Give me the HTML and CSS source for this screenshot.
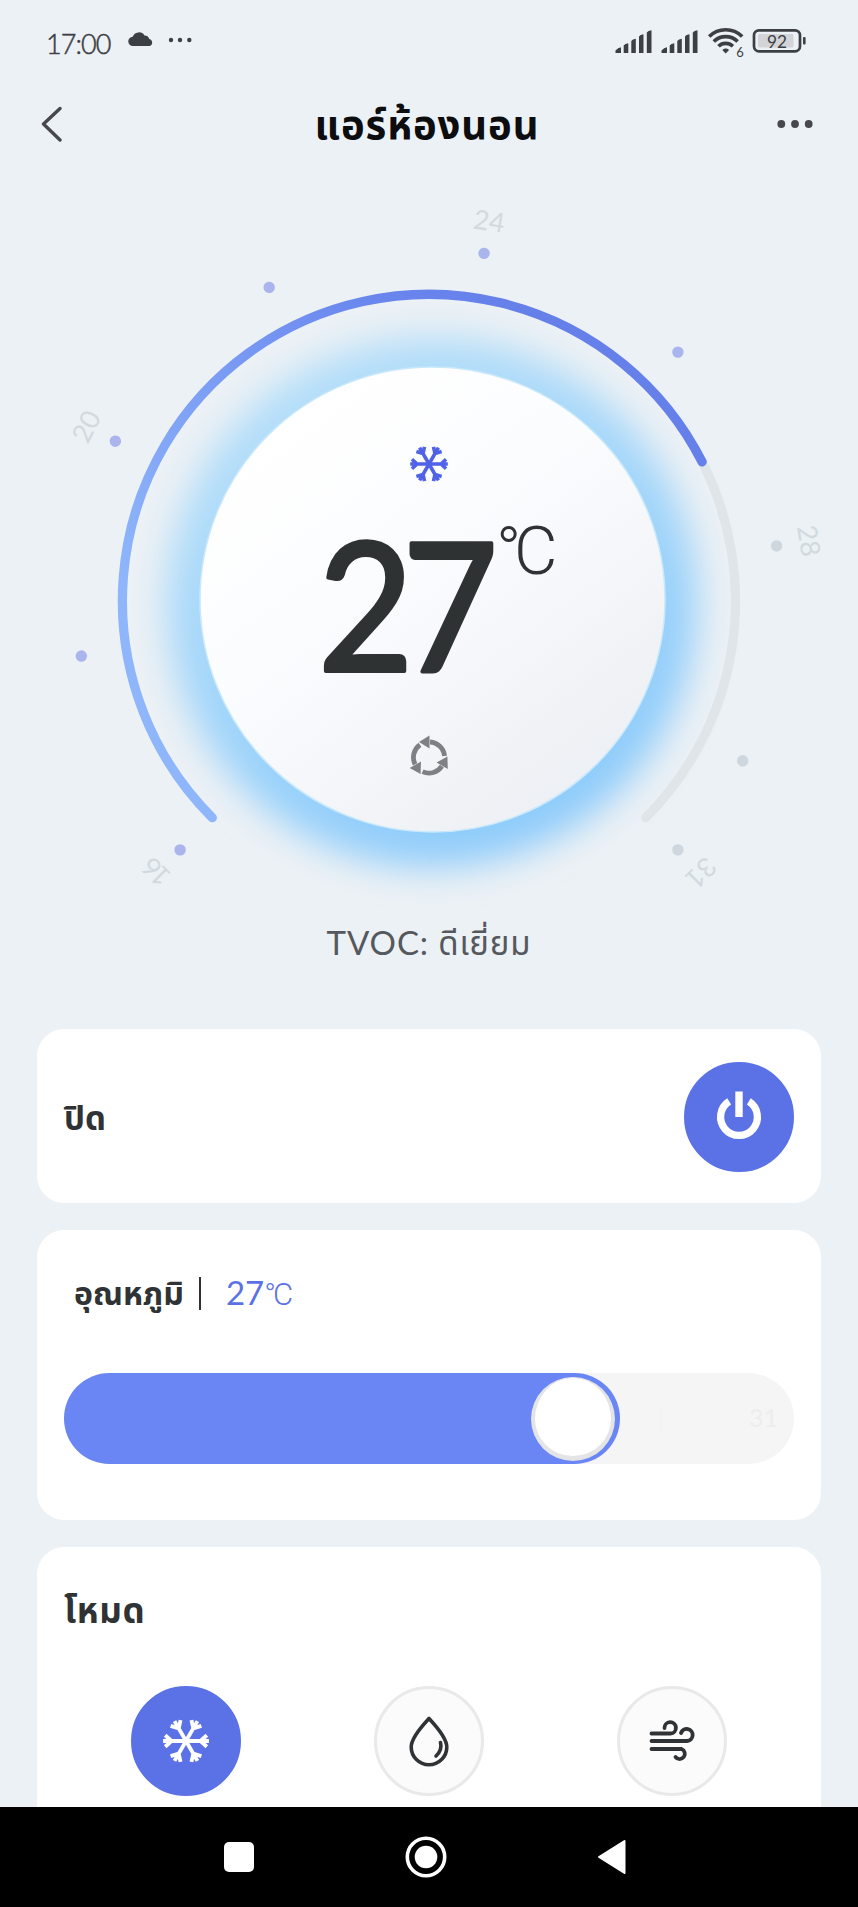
FILE: index.html
```html
<!DOCTYPE html>
<html lang="th">
<head>
<meta charset="utf-8">
<title>แอร์ห้องนอน</title>
<link rel="stylesheet" href="styles.css">
</head>
<body>
<svg class="sprite" width="0" height="0" aria-hidden="true">
  <defs>
    <g id="arm"><path d="M0 0H22M14 0L20 -5.5M14 0L20 5.5"/></g>
    <symbol id="snow" viewBox="-24 -24 48 48">
      <g fill="none" stroke="currentColor">
        <use href="#arm"/><use href="#arm" transform="rotate(60)"/><use href="#arm" transform="rotate(120)"/>
        <use href="#arm" transform="rotate(180)"/><use href="#arm" transform="rotate(240)"/><use href="#arm" transform="rotate(300)"/>
      </g>
    </symbol>
    <symbol id="signal" viewBox="0 0 38 25">
      <path d="M.5 24V21.500Q3 18.500 6 18.200V24ZM8.700 24V16.500Q10 14.500 13.300 14.300V24ZM16.300 24V12Q17.500 10 20.800 9.700V24ZM24 24V7.500Q25 5.500 28.500 5.200V24ZM31.800 24V3.500Q33 1.500 36.500 1.200V24Z" fill="#3c3f43"/>
    </symbol>
  </defs>
</svg>

<div class="phone">
  <div class="status">
    <span class="clock">17:00</span>
    <svg class="cloud" width="26" height="16" viewBox="0 0 26 16"><path d="M5 15a4.600 4.600 0 0 1-.3-9.200A6.500 6.500 0 0 1 16.500 4.600 5 5 0 0 1 21.300 8 3.600 3.600 0 0 1 21.500 15Z" fill="#3c3f43"/></svg>
    <svg class="more" width="24" height="6" viewBox="0 0 24 6"><g fill="#3c3f43"><circle cx="3" cy="3" r="2.200"/><circle cx="12" cy="3" r="2.200"/><circle cx="21.300" cy="3" r="2.200"/></g></svg>
    <span class="grow"></span>
    <svg class="sig" width="38" height="25"><use href="#signal"/></svg>
    <svg class="sig sig2" width="38" height="25"><use href="#signal"/></svg>
    <svg class="wifi" width="40" height="32" viewBox="0 0 40 32">
      <g fill="none" stroke="#3c3f43" stroke-width="3.700">
        <path d="M2.200 9.500a23.500 23.500 0 0 1 33 0"/><path d="M6.800 14.500a17 17 0 0 1 23.800 0"/><path d="M11.500 19.300a10.300 10.300 0 0 1 14.400 0"/>
      </g>
      <path d="M18.700 26.500l-3.400-3.600q3.400-2.600 6.800 0Z" fill="#3c3f43"/>
      <text x="29.300" y="29.500" class="wifi-gen">6</text>
    </svg>
    <svg class="batt" width="56" height="26" viewBox="0 0 56 26">
      <rect x="2" y="2.300" width="46" height="21" rx="5" fill="none" stroke="#3c3f43" stroke-width="2.700"/>
      <rect x="6" y="6" width="35.500" height="13.500" rx="1.500" fill="#d3d4d7"/>
      <rect x="51" y="9" width="2.600" height="7.500" rx="1" fill="#3c3f43"/>
      <text x="15" y="20" class="batt-num" textLength="20" lengthAdjust="spacingAndGlyphs">92</text>
    </svg>
  </div>

  <header class="head">
    <svg width="22" height="36" viewBox="0 0 22 36"><path d="M19 2.500L2.500 18 19 34" fill="none" stroke="#46484d" stroke-width="3.400" stroke-linecap="round" stroke-linejoin="round"/></svg>
    <h1 class="title">แอร์ห้องนอน</h1>
    <svg width="36" height="10" viewBox="0 0 36 10"><g fill="#46484d"><circle cx="4.300" cy="5" r="3.900"/><circle cx="18" cy="5" r="3.900"/><circle cx="31.700" cy="5" r="3.900"/></g></svg>
  </header>

  <svg class="dial" width="858" height="740" viewBox="0 180 858 740">
    <defs>
      <linearGradient id="prog" gradientUnits="userSpaceOnUse" x1="160" y1="640" x2="560" y2="360"><stop offset="0" stop-color="#8fb6fb"/><stop offset=".75" stop-color="#6a87ee"/><stop offset="1" stop-color="#6680ea"/></linearGradient>
      <linearGradient id="glow" x1=".2" y1="0" x2=".7" y2="1"><stop offset="0" stop-color="#b8e0f9"/><stop offset="1" stop-color="#8acafb"/></linearGradient>
      <linearGradient id="disc" x1=".2" y1=".1" x2=".8" y2=".9"><stop offset="0" stop-color="#fff"/><stop offset=".4" stop-color="#fbfcfe"/><stop offset="1" stop-color="#edf0f4"/></linearGradient>
      <filter id="soft" x="-20%" y="-20%" width="140%" height="140%"><feGaussianBlur stdDeviation="18"/></filter>
    </defs>
    <circle cx="432" cy="602" r="265" fill="url(#glow)" filter="url(#soft)"/>
    <circle cx="432.500" cy="599.500" r="232.500" fill="url(#disc)" stroke="#c9e9fb" stroke-width="1.500"/>
    <g fill="none" stroke-width="9.300" stroke-linecap="round">
      <path d="M702.100 461.900A306.500 306.500 0 0 1 645.700 817.700" stroke="#e0e5e9"/>
      <path d="M212.300 817.700A306.500 306.500 0 1 1 702.100 461.900" stroke="url(#prog)"/>
    </g>
    <g fill="#a9b5ec" transform="translate(429 601)">
      <circle r="5.700" transform="rotate(-135) translate(0 -352)"/><circle r="5.700" transform="rotate(-99) translate(0 -352)"/>
      <circle r="5.700" transform="rotate(-63) translate(0 -352)"/><circle r="5.700" transform="rotate(-27) translate(0 -352)"/>
      <circle r="5.700" transform="rotate(9) translate(0 -352)"/><circle r="5.700" transform="rotate(45) translate(0 -352)"/>
    </g>
    <g fill="#ced7de" transform="translate(429 601)">
      <circle r="5.700" transform="rotate(81) translate(0 -352)"/><circle r="5.700" transform="rotate(117) translate(0 -352)"/><circle r="5.700" transform="rotate(135) translate(0 -352)"/>
    </g>
    <g class="tick" transform="translate(429 601)">
      <text transform="rotate(-135) translate(0 -375)" class="tight">16</text>
      <text transform="rotate(-63) translate(0 -375)">20</text>
      <text transform="rotate(9) translate(0 -375)">24</text>
      <text transform="rotate(81) translate(0 -375)">28</text>
      <text transform="rotate(135) translate(0 -375)">31</text>
    </g>
    <use href="#snow" x="408.500" y="443.500" width="41" height="41" color="#4f62e8" stroke-width="4.200"/>
    <text class="big" transform="scale(.92 1)" x="345.600 437.500" y="671">27</text>
    <text class="unit" x="496 514" y="573.500">°C</text>
    <g transform="translate(429 757.500)" color="#7d8185">
      <g id="cyc"><path d="M1 -15.500A15.500 15.500 0 0 1 15.500 -1.500" fill="none" stroke="currentColor" stroke-width="4.800"/><path d="M-10 -15.500L0.500 -22V-9Z" fill="currentColor"/></g>
      <use href="#cyc" transform="rotate(120)"/><use href="#cyc" transform="rotate(240)"/>
    </g>
  </svg>

  <p class="air">TVOC: ดีเยี่ยม</p>

  <main class="cards">
    <section class="card power">
      <h2 class="label">ปิด</h2>
      <span class="round on"><svg width="50" height="52" viewBox="-25 -26 50 52"><path d="M9.800 -15.570A18.400 18.400 0 1 1 -9.800 -15.570" fill="none" stroke="#fff" stroke-width="7.300"/><path d="M-3.700 -25.500H3.700V0H-3.700Z" fill="#fff"/></svg></span>
    </section>
    <section class="card temp">
      <div class="temp-head"><h2 class="label temp-label">อุณหภูมิ</h2><i class="bar"></i><span class="value">27<span class="deg">°C</span></span></div>
      <div class="slider"><div class="fill"><span class="knob"></span></div><i class="notch"></i><span class="max">31</span></div>
    </section>
    <section class="card modes">
      <h2 class="label mode-label">โหมด</h2>
      <div class="row">
        <span class="round on"><svg width="50" height="50"><use href="#snow" stroke-width="3.700"/></svg></span>
        <span class="round"><svg width="44" height="52" viewBox="0 0 44 52"><g fill="none" stroke="#303335" stroke-width="3.600" stroke-linecap="round" stroke-linejoin="round"><path d="M22 3.500C17 9 4.200 22 4.200 32a17.800 17.800 0 0 0 35.600 0C39.800 22 27 9 22 3.500Z"/><path d="M33.500 27.500Q35.500 35 29 41"/></g></svg></span>
        <span class="round"><svg width="48" height="44" viewBox="0 0 48 44"><g fill="none" stroke="#303335" stroke-width="3.800" stroke-linecap="round"><path d="M3.500 14.500H22.500A5.700 5.700 0 1 0 16.500 9"/><path d="M3.500 22H39A6 6 0 1 0 33 14"/><path d="M3.500 30H33.500A5.200 5.200 0 1 1 27.500 38"/></g></svg></span>
      </div>
    </section>
  </main>

  <nav class="nav">
    <svg width="32" height="32" viewBox="0 0 32 32"><rect x="1" y="1" width="30" height="30" rx="5" fill="#fff"/></svg>
    <svg width="42" height="42" viewBox="-21 -21 42 42"><circle r="18.700" fill="none" stroke="#fff" stroke-width="3.600"/><circle r="11.300" fill="#fff"/></svg>
    <svg width="30" height="36" viewBox="0 0 30 36"><path d="M27.500 2L2 18 27.500 34Z" fill="#fff" stroke="#fff" stroke-width="2" stroke-linejoin="round"/></svg>
  </nav>
</div>
</body>
</html>
```
FILE: styles.css
```css
* { box-sizing: border-box; margin: 0; }
body { background: #ecf1f5; font-family: Lato, "Noto Sans Thai", "Noto Sans", sans-serif; color: #303335; }
svg { display: block; flex: none; }
.sprite { position: absolute; }
.phone { width: 858px; height: 1907px; overflow: hidden; display: flex; flex-direction: column; }
.status { height: 84px; flex: none; display: flex; align-items: flex-start; padding: 28px 50px 0 46px; }
.clock { width: 81px; font-size: 27px; line-height: 31px; letter-spacing: -.9px; font-weight: 300; color: #3c3f43; white-space: nowrap; -webkit-text-stroke: .5px #3c3f43; }
.cloud { margin: 3px 0 0 1px; }
.more { margin: 9px 0 0 14px; }
.grow { flex: 1; }
.sig { margin-top: 1px; }
.sig2 { margin-left: 8px; }
.wifi { margin: -1px 0 0 8px; }
.batt { margin-left: 5px; }
.wifi-gen { font-size: 13px; fill: #3c3f43; }
.batt-num { font-size: 17px; fill: #3c3f43; }
.head { height: 96px; flex: none; display: grid; grid-template-columns: 60px 1fr 60px; align-items: start; padding: 22px 45px 0 41px; }
.head svg:last-child { margin-top: 13px; justify-self: end; }
.title { text-align: center; font-size: 40px; line-height: 36px; letter-spacing: .9px; font-weight: 700; color: #0c0d0e; white-space: nowrap; }
.tick { font-size: 27px; font-weight: 400; fill: #d2dae0; text-anchor: middle; }
.tight { letter-spacing: -3px; }
.big { font-size: 179px; font-weight: 400; fill: #2f3233; stroke: #2f3233; stroke-width: 4px; stroke-linejoin: round; }
.unit { font-family: Roboto, sans-serif; font-size: 67px; font-weight: 300; fill: #2f3233; }
.air { height: 109px; flex: none; padding-top: 3px; text-align: center; font-size: 33px; line-height: 38px; letter-spacing: .9px; color: #55585d; }
.cards { flex: 1; min-height: 0; overflow: hidden; padding: 0 37px; display: flex; flex-direction: column; gap: 27px; }
.card { flex: none; background: #fff; border-radius: 27px; padding: 0 27px; }
.label { font-size: 33px; line-height: 40px; font-weight: 700; white-space: nowrap; }
.temp-label { font-size: 32px; }
.mode-label { font-size: 35px; letter-spacing: .6px; }
.power { height: 174px; display: flex; align-items: center; justify-content: space-between; padding-top: 2px; }
.round { width: 110px; height: 110px; border-radius: 50%; border: 3px solid #e9e9ea; background: #fbfbfb; display: flex; align-items: center; justify-content: center; }
.round.on { background: #5b72e6; border-color: #5b72e6; color: #fff; }
.temp { height: 290px; padding-top: 43px; }
.temp-head { height: 100px; padding-left: 10px; display: flex; align-items: flex-start; }
.bar { width: 2px; height: 33px; margin: 4px 0 0 15px; background: #303335; }
.value { margin-left: 25px; font-size: 33px; line-height: 38px; color: #5b72e6; }
.deg { font-family: Roboto, sans-serif; font-weight: 300; font-size: 31px; line-height: 30px; letter-spacing: -3px; }
.slider { height: 91px; border-radius: 46px; background: #f5f5f5; display: flex; align-items: center; }
.fill { width: 556px; height: 91px; border-radius: 46px; background: #6a86f4; display: flex; align-items: center; justify-content: flex-end; padding-right: 5px; }
.knob { width: 84px; height: 84px; border-radius: 50%; background: #fff; border: 4px solid #e3e4e6; border-top-width: 1px; border-bottom-width: 5px; }
.notch { width: 2px; height: 24px; margin-left: 40px; background: #f2f2f2; }
.max { margin-left: auto; margin-right: 16px; font-size: 25px; line-height: 28px; padding-bottom: 3px; color: #ededed; }
.modes { height: 400px; padding-top: 42px; }
.row { margin-top: 57px; display: grid; grid-template-columns: repeat(3, 1fr); justify-items: center; }
.nav { height: 100px; flex: none; background: #000; display: flex; align-items: center; justify-content: center; padding-right: 8px; gap: 150px; }
```
